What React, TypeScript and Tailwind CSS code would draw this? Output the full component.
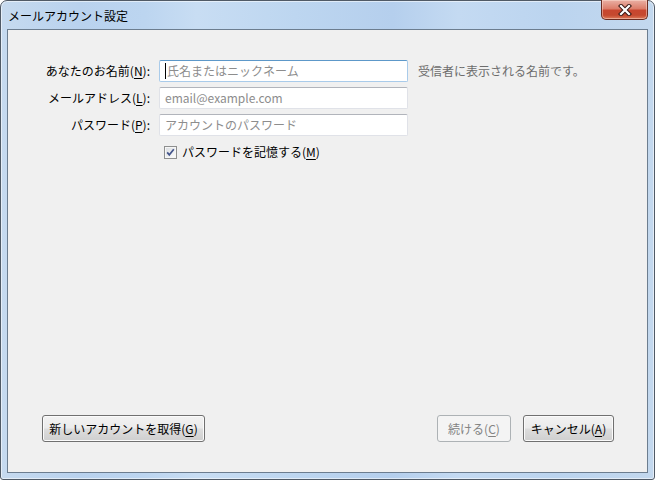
import React from 'react';

// Windows 7 style "mail account setup" dialog
function Key({ k }: { k: string }) {
  return <span className="underline underline-offset-[2px] decoration-1">{k}</span>;
}

function TextBox({ placeholder, focused }: { placeholder: string; focused?: boolean }) {
  return (
    <div
      className={
        focused
          ? 'flex h-[22px] w-[249px] items-center rounded-[2px] border border-[#a9cbea] border-t-[#5d98c9] bg-white pl-[5px]'
          : 'flex h-[22px] w-[249px] items-center rounded-[2px] border border-[#e0e2e8] border-t-[#b1b4bb] bg-white pl-[5px]'
      }
    >
      {focused && <span className="mr-px inline-block h-[16px] w-px bg-black" />}
      <span className="text-[12px] leading-[16px] text-[#8d8d8d] whitespace-nowrap">{placeholder}</span>
    </div>
  );
}

function Checkbox() {
  return (
    <svg width="13" height="13" viewBox="0 0 13 13">
      <defs>
        <linearGradient id="cb" x1="0" y1="0" x2="1" y2="1">
          <stop offset="0" stopColor="#dcdfe3" />
          <stop offset="1" stopColor="#fbfbfb" />
        </linearGradient>
      </defs>
      <rect x="0.5" y="0.5" width="12" height="12" fill="#f6f6f6" stroke="#8e8f8f" />
      <rect x="2" y="2" width="9" height="9" fill="url(#cb)" />
      <path d="M3.2 6.4 L5.3 8.9 L9.8 3.3" stroke="#45568c" strokeWidth="1.7" fill="none" />
    </svg>
  );
}

function CloseButton() {
  return (
    <div className="mr-[6px] -mt-px flex h-[20px] w-[47px] items-center justify-center rounded-b-[5px] border border-t-0 border-[#6a2c22] bg-[linear-gradient(#eab0a4_0%,#dc7e6b_45%,#c8462f_55%,#c5492f_80%,#dd7a5a_100%)] shadow-[inset_0_0_0_1px_rgba(255,230,220,0.45)]">
      <svg width="14" height="12" viewBox="0 0 14 12">
        <path d="M3 2 L11 10 M11 2 L3 10" stroke="#3a1a16" strokeWidth="4.2" strokeLinecap="square" fill="none" />
        <path d="M3 2 L11 10 M11 2 L3 10" stroke="#ffffff" strokeWidth="2.2" strokeLinecap="square" fill="none" />
      </svg>
    </div>
  );
}

export default function App() {
  return (
    <div className="h-[480px] w-[655px] font-['Noto_Sans_CJK_JP','Noto_Sans',sans-serif] text-black">
      <div className="flex h-full w-full flex-col rounded-t-[7px] rounded-b-[3px] border border-[#505a66] bg-[linear-gradient(90deg,#c6daef_0%,#b9d2ee_12%,#bcd5f0_22%,#c8ddf3_30%,#bdd6f0_45%,#b5cfed_60%,#c4daf2_70%,#bbd4ef_85%,#c3d8ee_100%)] shadow-[inset_0_0_0_1px_rgba(255,255,255,0.55)]">
        <div className="flex h-[28px] items-start pl-[7px]">
          <span className="pt-[7px] text-[12px] leading-[16px]">メールアカウント設定</span>
          <div className="flex-1" />
          <CloseButton />
        </div>

        <div className="mx-[6px] mb-[6px] flex flex-1 flex-col border border-[#6c7d8f] bg-[#f0f0f0]">
          <div className="grid grid-cols-[142px_249px_auto] items-center gap-x-[9px] gap-y-[5px] pt-[30px] text-[12px] leading-[16px]">
            <span className="text-right whitespace-nowrap">
              あなたのお名前(<Key k="N" />):
            </span>
            <TextBox placeholder="氏名またはニックネーム" focused />
            <span className="pl-px text-[#6d6d6d] whitespace-nowrap">受信者に表示される名前です。</span>

            <span className="text-right whitespace-nowrap">
              メールアドレス(<Key k="L" />):
            </span>
            <TextBox placeholder="email@example.com" />
            <span />

            <span className="text-right whitespace-nowrap">
              パスワード(<Key k="P" />):
            </span>
            <TextBox placeholder="アカウントのパスワード" />
            <span />
          </div>

          <div className="mt-[8px] flex items-center gap-[5px] pl-[156px] text-[12px] leading-[16px]">
            <Checkbox />
            <span className="whitespace-nowrap">
              パスワードを記憶する(<Key k="M" />)
            </span>
          </div>

          <div className="mt-auto flex items-center pb-[30px] pl-[34px] pr-[33px] text-[12px] leading-[16px]">
            <button className="h-[27px] w-[163px] rounded-[3px] border border-[#707070] bg-[linear-gradient(#f2f2f2_0%,#ebebeb_48%,#dddddd_52%,#cfcfcf_100%)] shadow-[inset_0_0_0_1px_#fbfbfb] whitespace-nowrap">
              新しいアカウントを取得(<Key k="G" />)
            </button>
            <div className="flex-1" />
            <button className="h-[27px] w-[74px] rounded-[3px] border border-[#adb2b5] bg-[#f4f4f4] text-[#838383] whitespace-nowrap">
              続ける(<Key k="C" />)
            </button>
            <button className="ml-[12px] h-[27px] w-[91px] rounded-[3px] border border-[#707070] bg-[linear-gradient(#f2f2f2_0%,#ebebeb_48%,#dddddd_52%,#cfcfcf_100%)] shadow-[inset_0_0_0_1px_#fbfbfb] whitespace-nowrap">
              キャンセル(<Key k="A" />)
            </button>
          </div>
        </div>
      </div>
    </div>
  );
}
